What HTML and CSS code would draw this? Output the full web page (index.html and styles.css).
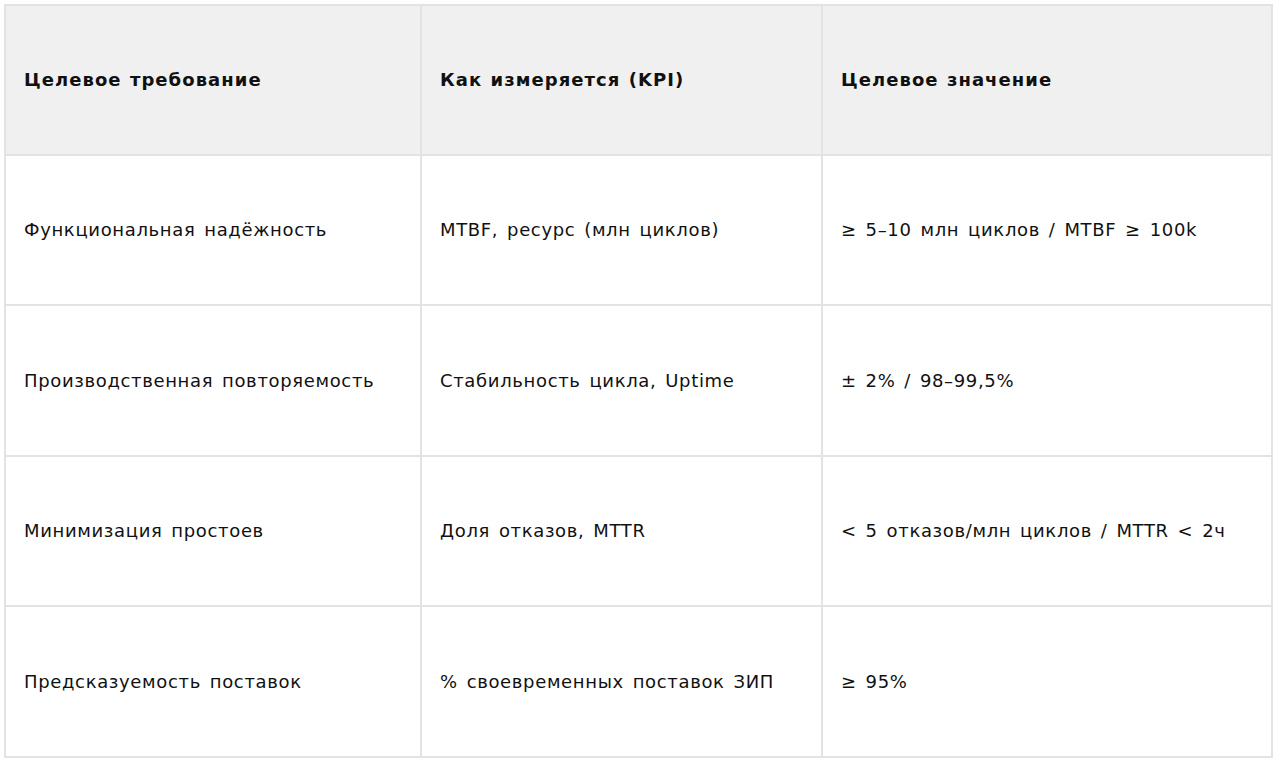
FILE: index.html
```html
<!DOCTYPE html>
<html lang="ru">
<head>
<meta charset="utf-8">
<link rel="stylesheet" href="styles.css">
</head>
<body>
<table class="kpi">
  <colgroup>
    <col class="c1"><col class="c2"><col class="c3">
  </colgroup>
  <thead>
    <tr>
      <th>Целевое требование</th>
      <th>Как измеряется (KPI)</th>
      <th>Целевое значение</th>
    </tr>
  </thead>
  <tbody>
    <tr>
      <td>Функциональная надёжность</td>
      <td>MTBF, ресурс (млн циклов)</td>
      <td>≥ 5–10 млн циклов / MTBF ≥ 100k</td>
    </tr>
    <tr>
      <td>Производственная повторяемость</td>
      <td>Стабильность цикла, Uptime</td>
      <td>± 2% / 98–99,5%</td>
    </tr>
    <tr>
      <td>Минимизация простоев</td>
      <td>Доля отказов, MTTR</td>
      <td>&lt; 5 отказов/млн циклов / MTTR &lt; 2ч</td>
    </tr>
    <tr>
      <td>Предсказуемость поставок</td>
      <td>% своевременных поставок ЗИП</td>
      <td>≥ 95%</td>
    </tr>
  </tbody>
</table>
</body>
</html>
```
FILE: styles.css
```css
html, body {
  margin: 0;
  padding: 0;
  background: #ffffff;
}
body {
  padding: 4px;
  font-family: "DejaVu Sans", Verdana, sans-serif;
  font-size: 18px;
  color: #111111;
}
.kpi {
  border-collapse: separate;
  border-spacing: 0;
  border-left: 2px solid #e3e3e3;
  border-top: 2px solid #e3e3e3;
  table-layout: fixed;
  width: 1269px;
}
.c1 { width: 416px; }
.c2 { width: 401px; }
.c3 { width: 450px; }
.kpi th,
.kpi td {
  border-right: 2px solid #e3e3e3;
  border-bottom: 2px solid #e3e3e3;
  padding: 0 18px;
  height: 148px;
  text-align: left;
  vertical-align: middle;
  line-height: 1.4;
  letter-spacing: 0.65px;
  word-spacing: 2.5px;
  white-space: nowrap;
}
.kpi th {
  background: #f0f0f0;
  font-weight: bold;
  letter-spacing: 1.05px;
  word-spacing: 1px;
}
.kpi tbody tr:nth-child(even) td { height: 149px; }
```
